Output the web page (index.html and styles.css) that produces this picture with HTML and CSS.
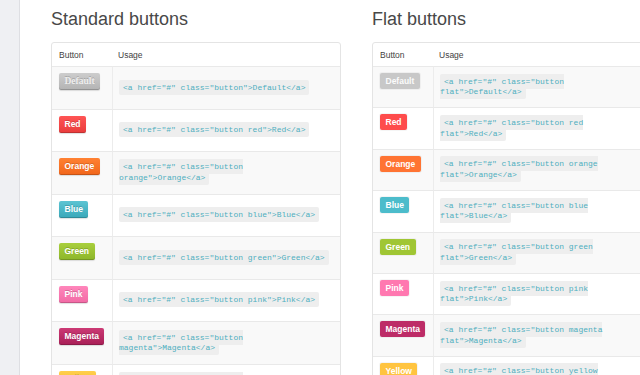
FILE: index.html
```html
<!DOCTYPE html>
<html>
<head>
<meta charset="utf-8">
<link rel="stylesheet" href="styles.css">
</head>
<body>
<div class="page">
  <div class="sidebar"></div>
  <div class="main">
    <section class="section">
      <h2 class="title">Standard buttons</h2>
      <table class="table std">
        <thead><tr><th class="c1">Button</th><th class="c2">Usage</th></tr></thead>
        <tbody>
          <tr><td class="c1"><a href="#" class="button default serif">Default</a></td><td class="c2"><code>&lt;a href="#" class="button"&gt;Default&lt;/a&gt;</code></td></tr>
          <tr><td class="c1"><a href="#" class="button red">Red</a></td><td class="c2"><code>&lt;a href="#" class="button red"&gt;Red&lt;/a&gt;</code></td></tr>
          <tr><td class="c1"><a href="#" class="button orange">Orange</a></td><td class="c2"><code>&lt;a href="#" class="button orange"&gt;Orange&lt;/a&gt;</code></td></tr>
          <tr><td class="c1"><a href="#" class="button blue">Blue</a></td><td class="c2"><code>&lt;a href="#" class="button blue"&gt;Blue&lt;/a&gt;</code></td></tr>
          <tr><td class="c1"><a href="#" class="button green">Green</a></td><td class="c2"><code>&lt;a href="#" class="button green"&gt;Green&lt;/a&gt;</code></td></tr>
          <tr><td class="c1"><a href="#" class="button pink">Pink</a></td><td class="c2"><code>&lt;a href="#" class="button pink"&gt;Pink&lt;/a&gt;</code></td></tr>
          <tr><td class="c1"><a href="#" class="button magenta">Magenta</a></td><td class="c2"><code>&lt;a href="#" class="button magenta"&gt;Magenta&lt;/a&gt;</code></td></tr>
          <tr><td class="c1"><a href="#" class="button yellow">Yellow</a></td><td class="c2"><code>&lt;a href="#" class="button yellow"&gt;Yellow&lt;/a&gt;</code></td></tr>
        </tbody>
      </table>
    </section>
    <section class="section">
      <h2 class="title">Flat buttons</h2>
      <table class="table flat-table">
        <thead><tr><th class="c1">Button</th><th class="c2">Usage</th></tr></thead>
        <tbody>
          <tr><td class="c1"><a href="#" class="button default flat">Default</a></td><td class="c2"><code>&lt;a href="#" class="button flat"&gt;Default&lt;/a&gt;</code></td></tr>
          <tr><td class="c1"><a href="#" class="button red flat">Red</a></td><td class="c2"><code>&lt;a href="#" class="button red flat"&gt;Red&lt;/a&gt;</code></td></tr>
          <tr><td class="c1"><a href="#" class="button orange flat">Orange</a></td><td class="c2"><code>&lt;a href="#" class="button orange flat"&gt;Orange&lt;/a&gt;</code></td></tr>
          <tr><td class="c1"><a href="#" class="button blue flat">Blue</a></td><td class="c2"><code>&lt;a href="#" class="button blue flat"&gt;Blue&lt;/a&gt;</code></td></tr>
          <tr><td class="c1"><a href="#" class="button green flat">Green</a></td><td class="c2"><code>&lt;a href="#" class="button green flat"&gt;Green&lt;/a&gt;</code></td></tr>
          <tr><td class="c1"><a href="#" class="button pink flat">Pink</a></td><td class="c2"><code>&lt;a href="#" class="button pink flat"&gt;Pink&lt;/a&gt;</code></td></tr>
          <tr><td class="c1"><a href="#" class="button magenta flat">Magenta</a></td><td class="c2"><code>&lt;a href="#" class="button magenta flat"&gt;Magenta&lt;/a&gt;</code></td></tr>
          <tr><td class="c1"><a href="#" class="button yellow flat">Yellow</a></td><td class="c2"><code>&lt;a href="#" class="button yellow flat"&gt;Yellow&lt;/a&gt;</code></td></tr>
        </tbody>
      </table>
    </section>
  </div>
</div>
</body>
</html>
```
FILE: styles.css
```css
html, body {
  margin: 0;
  padding: 0;
}
body {
  background: #fff;
  overflow: hidden;
  font-family: "Liberation Sans", Arial, sans-serif;
  color: #444;
}
.page {
  display: flex;
  min-height: 375px;
}
.sidebar {
  flex: none;
  width: 19px;
  background: #eff0f3;
  border-right: 1px solid #dedfe3;
}
.main {
  flex: none;
  display: flex;
  gap: 31px;
  padding: 9px 0 0 31px;
}
.section {
  flex: none;
  width: 290px;
}
.title {
  margin: 0 0 12px;
  font-size: 18px;
  line-height: 21px;
  font-weight: normal;
  color: #484848;
}
.table {
  width: 290px;
  table-layout: fixed;
  border-collapse: separate;
  border-spacing: 0;
  border: 1px solid #e4e4e4;
  border-radius: 3px;
}
.table th, .table td {
  box-sizing: border-box;
  text-align: left;
}
.table th {
  height: 23px;
  font-size: 8.5px;
  font-weight: normal;
  color: #3f3f3f;
  vertical-align: middle;
  padding: 0;
}
.table th.c1 { width: 60px; padding-left: 7px; }
.table th.c2 { padding-left: 6px; }
.table td {
  border-top: 1px solid #e9e9e9;
  padding: 0;
}
.std td { height: 42.57px; }
.flat-table td { height: 41.4px; }
.table tbody tr:nth-child(odd) td {
  background: #f9f9f9;
}
.table td.c1 {
  vertical-align: top;
  padding: 6px 0 0 7px;
  line-height: 17px;
  font-size: 8.5px;
}
.table td.c2 {
  vertical-align: middle;
  border-left: 1px solid #ececec;
  padding: 0 9px 0 6px;
  font-family: "Liberation Mono", "Courier New", monospace;
  font-size: 8px;
  line-height: 10.5px;
}
code {
  font-family: "Liberation Mono", "Courier New", monospace;
  font-size: 8px;
  color: #4eafc0;
  background: #eeeeee;
  padding: 3px 4px;
  border-radius: 2px;
}
.button {
  display: inline-block;
  vertical-align: top;
  box-sizing: border-box;
  height: 17px;
  line-height: 17px;
  padding: 0 5.5px;
  font-size: 8.5px;
  font-weight: bold;
  color: #fff;
  text-decoration: none;
  border-radius: 2px;
  text-shadow: 0 -1px 0 rgba(0, 0, 0, 0.18);
  box-shadow: inset 0 -1px 0 rgba(0, 0, 0, 0.18), 0 1px 1px rgba(0, 0, 0, 0.12);
}
.serif {
  font-family: "Liberation Serif", "Times New Roman", serif;
  font-size: 9.5px;
}
.default { background: linear-gradient(#cdcdcd, #b3b3b3); color: #eeeeee; }
.red { background: linear-gradient(#ff5454, #e93c3c); }
.orange { background: linear-gradient(#ff8133, #f1661b); }
.blue { background: linear-gradient(#5cc4d3, #3aa8b9); }
.green { background: linear-gradient(#a9cf3d, #8db62a); }
.pink { background: linear-gradient(#ff86bb, #f26aa5); }
.magenta { background: linear-gradient(#cc3a75, #a81f56); }
.yellow { background: linear-gradient(#ffcf4c, #f7b82e); }

.button.flat {
  box-shadow: 0 0 0 1px rgba(0, 0, 0, 0.04);
  text-shadow: none;
  height: 16px;
  line-height: 16px;
}
.default.flat { background: #c8c8c8; color: #fbfbfb; }
.red.flat { background: #fe4c4c; }
.orange.flat { background: #ff7433; }
.blue.flat { background: #4cbccb; }
.green.flat { background: #a0c634; }
.pink.flat { background: #ff78b0; }
.magenta.flat { background: #bd2c67; }
.yellow.flat { background: #ffc440; }
```
